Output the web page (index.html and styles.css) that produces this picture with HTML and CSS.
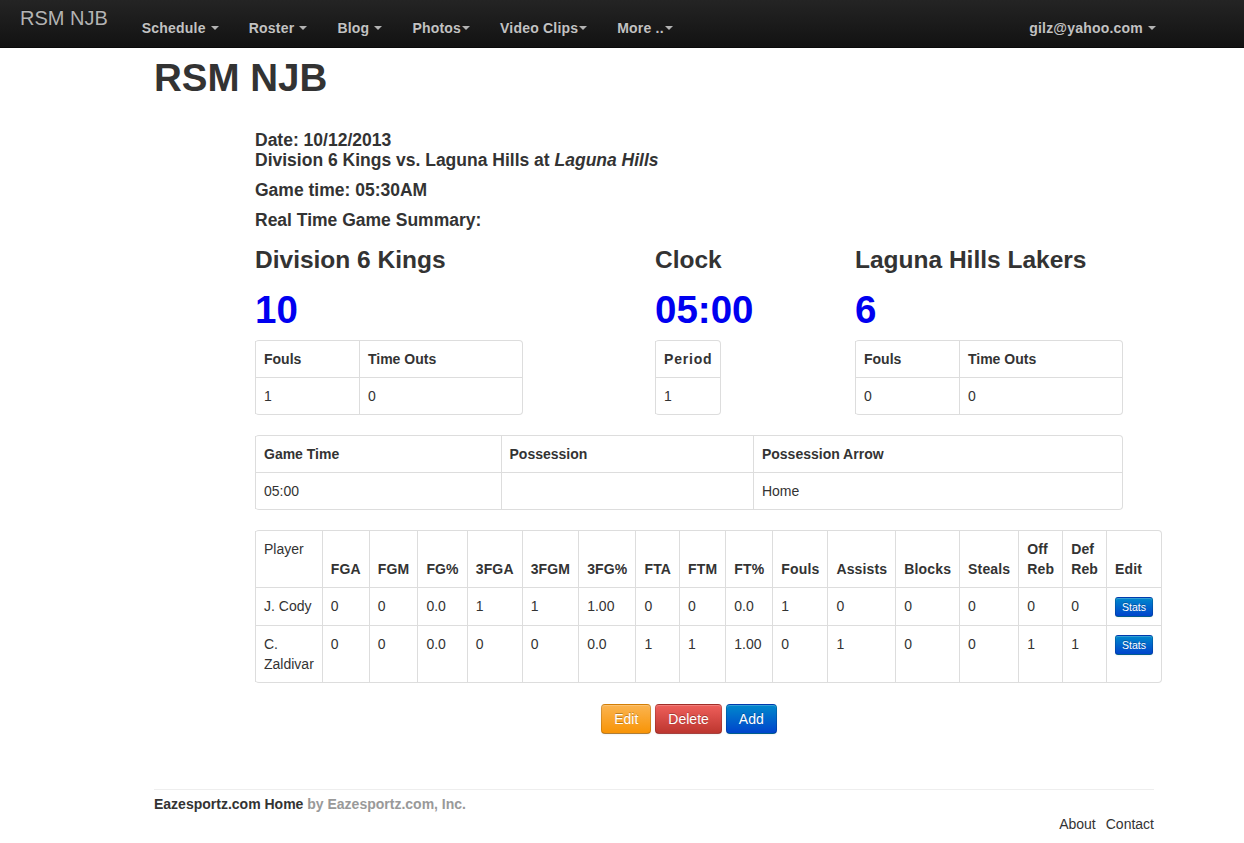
FILE: index.html
```html
<!DOCTYPE html>
<html>
<head>
<meta charset="utf-8">
<title>RSM NJB</title>
<link rel="stylesheet" href="styles.css">
</head>
<body>
<header class="navbar">
  <a class="brand" href="#">RSM NJB</a>
  <ul class="nav">
    <li><a href="#">Schedule <b class="caret"></b></a></li>
    <li><a href="#">Roster <b class="caret"></b></a></li>
    <li><a href="#">Blog <b class="caret"></b></a></li>
    <li><a href="#">Photos<b class="caret"></b></a></li>
    <li><a href="#">Video Clips<b class="caret"></b></a></li>
    <li><a href="#">More ..<b class="caret"></b></a></li>
  </ul>
  <ul class="nav nav-right">
    <li><a href="#">gilz@yahoo.com <b class="caret"></b></a></li>
  </ul>
</header>

<div class="container">
  <h1 class="site-title">RSM NJB</h1>

  <div class="game">
    <h4>Date: 10/12/2013<br>Division 6 Kings vs. Laguna Hills at <i>Laguna Hills</i></h4>
    <h4>Game time: 05:30AM</h4>
    <h4>Real Time Game Summary:</h4>

    <div class="scoreboard">
      <div class="score-col">
        <h3>Division 6 Kings</h3>
        <h1 class="score">10</h1>
        <table class="table table-bordered team-table">
          <thead><tr><th>Fouls</th><th>Time Outs</th></tr></thead>
          <tbody><tr><td>1</td><td>0</td></tr></tbody>
        </table>
      </div>
      <div class="score-col">
        <h3>Clock</h3>
        <h1 class="score">05:00</h1>
        <table class="table table-bordered table-auto">
          <thead><tr><th>Period</th></tr></thead>
          <tbody><tr><td>1</td></tr></tbody>
        </table>
      </div>
      <div class="score-col">
        <h3>Laguna Hills Lakers</h3>
        <h1 class="score">6</h1>
        <table class="table table-bordered team-table">
          <thead><tr><th>Fouls</th><th>Time Outs</th></tr></thead>
          <tbody><tr><td>0</td><td>0</td></tr></tbody>
        </table>
      </div>
    </div>

    <table class="table table-bordered">
      <thead><tr><th>Game Time</th><th>Possession</th><th>Possession Arrow</th></tr></thead>
      <tbody><tr><td>05:00</td><td></td><td>Home</td></tr></tbody>
    </table>

    <table class="table table-bordered stats-table">
      <thead>
        <tr>
          <td class="top">Player</td>
          <th>FGA</th><th>FGM</th><th>FG%</th><th>3FGA</th><th>3FGM</th><th>3FG%</th>
          <th>FTA</th><th>FTM</th><th>FT%</th><th>Fouls</th><th>Assists</th><th>Blocks</th>
          <th>Steals</th><th>Off Reb</th><th>Def Reb</th><th>Edit</th>
        </tr>
      </thead>
      <tbody>
        <tr>
          <td>J. Cody</td><td>0</td><td>0</td><td>0.0</td><td>1</td><td>1</td><td>1.00</td>
          <td>0</td><td>0</td><td>0.0</td><td>1</td><td>0</td><td>0</td><td>0</td><td>0</td><td>0</td>
          <td><a class="btn btn-mini btn-primary" href="#">Stats</a></td>
        </tr>
        <tr>
          <td>C. Zaldivar</td><td>0</td><td>0</td><td>0.0</td><td>0</td><td>0</td><td>0.0</td>
          <td>1</td><td>1</td><td>1.00</td><td>0</td><td>1</td><td>0</td><td>0</td><td>1</td><td>1</td>
          <td><a class="btn btn-mini btn-primary" href="#">Stats</a></td>
        </tr>
      </tbody>
    </table>

    <div class="actions">
      <a class="btn btn-warning" href="#">Edit</a>
      <a class="btn btn-danger" href="#">Delete</a>
      <a class="btn btn-primary" href="#">Add</a>
    </div>
  </div>

  <hr class="footer-rule">
  <footer class="footer">
    <p class="footer-brand"><a href="#" class="home">Eazesportz.com Home</a> <span class="by">by Eazesportz.com, Inc.</span></p>
    <ul class="footer-links">
      <li><a href="#">About</a></li>
      <li><a href="#">Contact</a></li>
    </ul>
  </footer>
</div>
</body>
</html>
```

FILE: styles.css
```css
* { box-sizing: border-box; }

body {
  margin: 0;
  font-family: "Liberation Sans", Arial, Helvetica, sans-serif;
  font-size: 14px;
  line-height: 20px;
  color: #333;
  background: #fff;
}

a { text-decoration: none; color: inherit; }
ul { list-style: none; margin: 0; padding: 0; }

/* Navbar */
.navbar {
  display: flex;
  align-items: flex-start;
  height: 48px;
  background: linear-gradient(to bottom, #242424, #121212);
  border-bottom: 1px solid #0a0a0a;
  padding: 0 73px 0 20px;
}
.brand {
  font-size: 20px;
  line-height: 20px;
  padding-top: 8px;
  color: #b3b3b3;
  margin-right: 19px;
  text-shadow: 0 -1px 0 rgba(0,0,0,.25);
}
.nav {
  display: flex;
}
.nav a {
  display: block;
  padding: 18px 15px 0;
  font-weight: bold;
  font-size: 14px;
  line-height: 20px;
  color: #c2c2c2;
  letter-spacing: .2px;
  text-shadow: 0 -1px 0 rgba(0,0,0,.25);
}
.nav-right { margin-left: auto; }
.caret {
  display: inline-block;
  width: 0;
  height: 0;
  vertical-align: top;
  margin-top: 8px;
  margin-left: 1px;
  border-top: 4px solid #b3b3b3;
  border-left: 4px solid transparent;
  border-right: 4px solid transparent;
}

/* Page */
.container {
  width: 1000px;
  margin-left: 154px;
}
h1, h3, h4 {
  font-weight: bold;
  margin: 10px 0;
  color: #333;
  text-rendering: optimizeLegibility;
}
h1 { font-size: 38.5px; line-height: 40px; }
h3 { font-size: 24.5px; line-height: 40px; }
h4 { font-size: 17.5px; line-height: 20px; }

.site-title { margin: 10px 0 0; }

.game {
  width: 868px;
  margin-left: 101px;
  padding-top: 22px;
}

.scoreboard {
  display: grid;
  grid-template-columns: 400px 200px 268px;
}
.score-col h3 { margin-top: 0; }
.score { color: #0000f0; }

/* Tables */
.table {
  width: 100%;
  margin-bottom: 20px;
  border-spacing: 0;
  border-collapse: separate;
  border: 1px solid #ddd;
  border-left: 0;
  border-radius: 4px;
}
.table-auto { width: auto; }
.team-table { width: 268px; }
.table th, .table td {
  padding: 8px;
  line-height: 20px;
  text-align: left;
  vertical-align: top;
  border-left: 1px solid #ddd;
  border-top: 1px solid #ddd;
}
.table th { font-weight: bold; }
.table-auto th { letter-spacing: .8px; }
.table thead tr:first-child th,
.table thead tr:first-child td { border-top: 0; }
.table thead th { vertical-align: bottom; }
.table thead td.top { vertical-align: top; }

.stats-table { margin-bottom: 21px; }
.stats-table th { letter-spacing: .15px; }

/* Buttons */
.actions {
  text-align: center;
  font-size: 0;
}
.btn {
  display: inline-block;
  padding: 4px 12px;
  font-size: 14px;
  line-height: 20px;
  color: #fff;
  text-shadow: 0 -1px 0 rgba(0,0,0,.25);
  border: 1px solid rgba(0,0,0,.15);
  border-bottom-color: rgba(0,0,0,.3);
  border-radius: 4px;
  box-shadow: inset 0 1px 0 rgba(255,255,255,.2), 0 1px 2px rgba(0,0,0,.05);
  margin: 0 2px;
}
.btn-warning { background: linear-gradient(to bottom, #fbb450, #f89406); }
.btn-danger { background: linear-gradient(to bottom, #ee5f5b, #bd362f); }
.btn-primary { background: linear-gradient(to bottom, #0088cc, #0044cc); }
.btn-mini {
  padding: 0 6px;
  font-size: 10.5px;
  line-height: 18px;
  border-radius: 3px;
  margin: 0;
}

/* Footer */
.footer-rule {
  margin: 55px 0 3px;
  border: 0;
  border-top: 1px solid #eee;
  border-bottom: 1px solid #fff;
}
.footer-brand {
  margin: 0;
  font-weight: bold;
}
.footer-brand .home { color: #333; }
.footer-brand .by { color: #999; }
.footer-links {
  display: flex;
  justify-content: flex-end;
  gap: 10px;
}
```
